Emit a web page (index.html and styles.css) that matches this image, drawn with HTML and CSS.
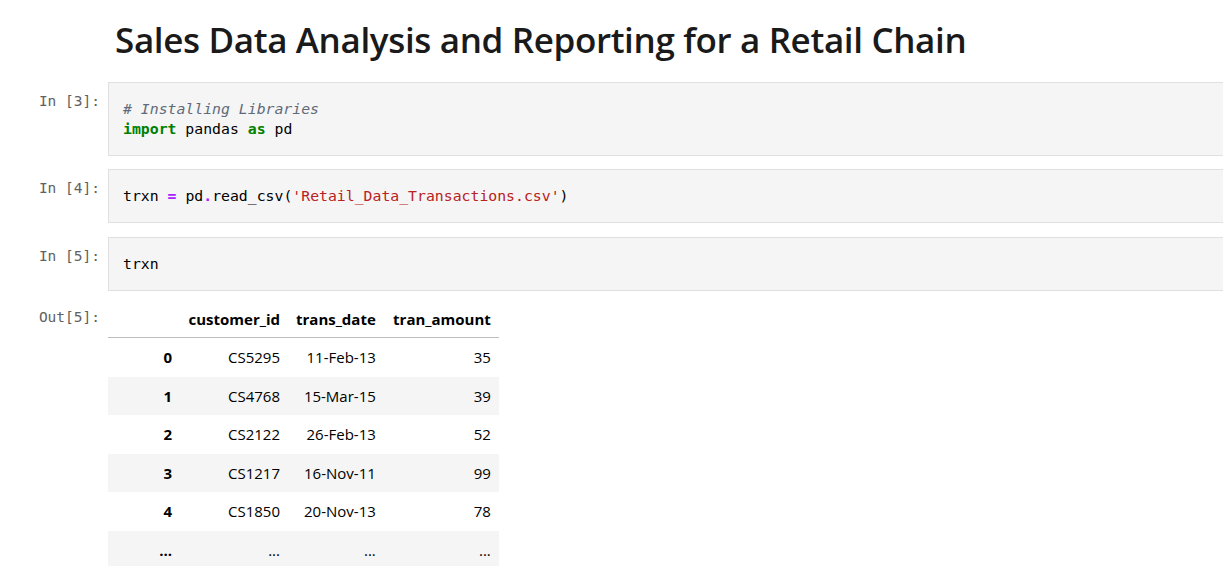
FILE: index.html
```html
<!DOCTYPE html>
<html>
<head>
<meta charset="utf-8">
<link rel="stylesheet" href="styles.css">
</head>
<body>
<div class="nb">
  <div class="cell md">
    <div class="prompt"></div>
    <h1 class="title">Sales Data Analysis and Reporting for a Retail Chain</h1>
  </div>

  <div class="cell code c1">
    <div class="prompt">In [3]:</div>
    <div class="input"><pre><span class="cm"># Installing Libraries</span>
<span class="kw">import</span> pandas <span class="kw">as</span> pd</pre></div>
  </div>

  <div class="cell code c2">
    <div class="prompt">In [4]:</div>
    <div class="input"><pre>trxn <span class="op">=</span> pd<span class="op">.</span>read_csv(<span class="st">'Retail_Data_Transactions.csv'</span>)</pre></div>
  </div>

  <div class="cell code c3">
    <div class="prompt">In [5]:</div>
    <div class="input"><pre>trxn</pre></div>
  </div>

  <div class="cell out">
    <div class="prompt">Out[5]:</div>
    <div class="output">
      <table class="df">
        <thead>
          <tr><th class="ix"></th><th class="c-id">customer_id</th><th class="c-date">trans_date</th><th class="c-amt">tran_amount</th></tr>
        </thead>
        <tbody>
          <tr><th>0</th><td>CS5295</td><td>11-Feb-13</td><td>35</td></tr>
          <tr><th>1</th><td>CS4768</td><td>15-Mar-15</td><td>39</td></tr>
          <tr><th>2</th><td>CS2122</td><td>26-Feb-13</td><td>52</td></tr>
          <tr><th>3</th><td>CS1217</td><td>16-Nov-11</td><td>99</td></tr>
          <tr><th>4</th><td>CS1850</td><td>20-Nov-13</td><td>78</td></tr>
          <tr><th>...</th><td>...</td><td>...</td><td>...</td></tr>
        </tbody>
      </table>
    </div>
  </div>
</div>
</body>
</html>
```

FILE: styles.css
```css
html, body {
  margin: 0;
  padding: 0;
  background: #ffffff;
  overflow: hidden;
}

body {
  font-family: "Open Sans", "Noto Sans", sans-serif;
  color: #000000;
}

.nb {
  display: flex;
  flex-direction: column;
  padding-top: 13px;
}

.cell {
  display: flex;
  align-items: flex-start;
}

.prompt {
  flex: 0 0 100px;
  width: 100px;
  padding-right: 8px;
  text-align: right;
  font-family: "DejaVu Sans Mono", "Liberation Mono", monospace;
  font-size: 14.5px;
  line-height: 20px;
  color: #616161;
  margin-top: 9px;
  white-space: pre;
}

.title {
  margin: 0;
  padding-left: 7px;
  font-size: 35px;
  font-weight: 600;
  line-height: 54px;
  color: #1a1a1a;
  letter-spacing: -0.36px;
}

.md {
  margin-bottom: 15px;
}

.input {
  flex: 1;
  background: #f5f5f5;
  border: 1px solid #e0e0e0;
  border-right: none;
  padding: 16px 0 16px 14px;
}

.input pre {
  margin: 0;
  font-family: "DejaVu Sans Mono", "Liberation Mono", monospace;
  font-size: 14.8px;
  line-height: 20px;
  color: #000000;
}

.c1 { margin-bottom: 13px; }
.c2 { margin-bottom: 14px; }
.c3 { margin-bottom: 9px; }

.cm { color: #5f6b7a; font-style: italic; }
.kw { color: #008000; font-weight: bold; }
.op { color: #aa22ff; font-weight: bold; }
.st { color: #ba2121; }

.out .prompt {
  margin-top: 7px;
}

.df {
  border-collapse: collapse;
  font-family: "Open Sans", "Noto Sans", sans-serif;
  font-size: 15px;
  color: #000000;
}

.df th, .df td {
  padding: 0 8px;
  height: 38.5px;
  text-align: right;
  white-space: nowrap;
  font-weight: normal;
}

.df thead th {
  font-weight: bold;
  border-bottom: 1px solid #bdbdbd;
  height: 37px;
}

.df tbody th {
  font-weight: bold;
}

.df .ix { width: 56px; }
.df .c-id { width: 92px; }
.df .c-date { width: 79px; }
.df .c-amt { width: 99px; }

.df tbody tr:nth-child(even) {
  background: #f5f5f5;
}
```
